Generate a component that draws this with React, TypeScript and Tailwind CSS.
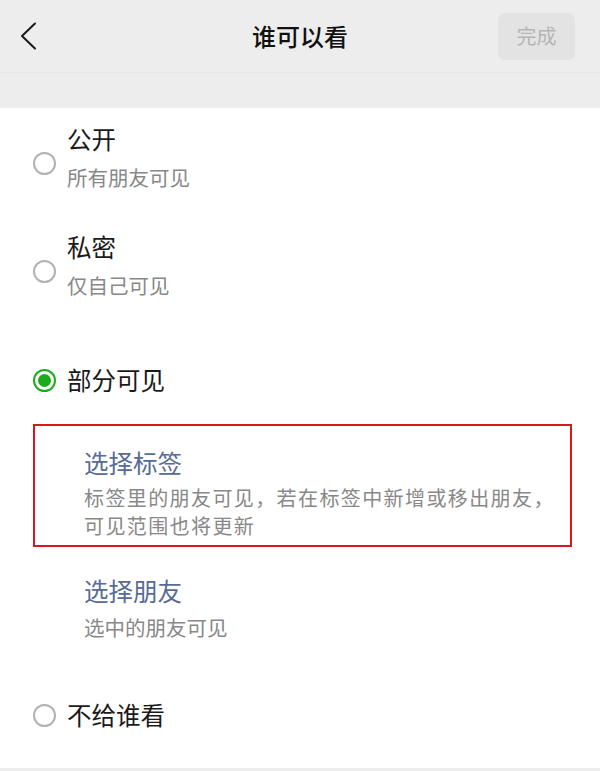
import * as React from 'react';

const FONT = '"Noto Sans CJK SC", "Noto Sans", sans-serif';

type Option = {
  key: string;
  title: string;
  desc?: string;
};

function Radio({ checked = false }: { checked?: boolean }) {
  if (checked) {
    return (
      <span className="flex h-[23px] w-[23px] flex-shrink-0 items-center justify-center rounded-full border-2 border-[#1aad19]">
        <span className="block h-[13px] w-[13px] rounded-full bg-[#1aad19]" />
      </span>
    );
  }
  return <span className="block h-[23px] w-[23px] flex-shrink-0 rounded-full border-2 border-[#b2b2b2]" />;
}

function BackIcon() {
  return (
    <svg width="18" height="28" viewBox="0 0 18 28" fill="none" className="block">
      <polyline points="15,1.5 2,14 15,26.5" stroke="#1a1a1a" strokeWidth="2" strokeLinecap="round" strokeLinejoin="round" />
    </svg>
  );
}

const PLAIN: Option[] = [
  { key: 'public', title: '公开', desc: '所有朋友可见' },
  { key: 'private', title: '私密', desc: '仅自己可见' },
];

function DescOption({ option }: { option: Option }) {
  return (
    <div className="flex h-[108px] items-start pl-[33px] pt-[16px]">
      <div className="mt-[28px] flex-shrink-0">
        <Radio />
      </div>
      <div className="ml-[11px] flex flex-col">
        <span className="text-[24.5px] leading-[30px] text-[#1a1a1a]">{option.title}</span>
        <span className="mt-[9px] text-[20.5px] leading-[28px] text-[#888]">{option.desc}</span>
      </div>
    </div>
  );
}

export default function App() {
  return (
    <div className="flex h-[771px] w-[600px] flex-col overflow-hidden bg-white" style={{ fontFamily: FONT }}>
      {/* Header */}
      <div className="flex h-[108px] flex-shrink-0 flex-col bg-[#ededed]">
        <div className="grid h-[73px] grid-cols-[1fr_auto_1fr] items-center border-b border-[#e6e6e6]">
          <div className="pl-[20px]">
            <BackIcon />
          </div>
          <span className="text-[24px] font-medium leading-[30px] text-[#111]">谁可以看</span>
          <div className="flex justify-end pr-[25px]">
            <button
              type="button"
              className="flex h-[47px] w-[77px] items-center justify-center rounded-[7px] bg-[#e3e3e3] text-[20px] text-[#b5b5b5]"
            >
              完成
            </button>
          </div>
        </div>
      </div>

      {/* Options */}
      <div className="flex flex-1 flex-col">
        {PLAIN.map((o) => (
          <DescOption key={o.key} option={o} />
        ))}

        <div className="mt-[41px] flex items-center pl-[33px]">
          <Radio checked />
          <span className="ml-[11px] text-[24.5px] leading-[30px] text-[#1a1a1a]">部分可见</span>
        </div>

        {/* Highlighted sub-option */}
        <div className="ml-[33px] mt-[29px] flex h-[123px] w-[539px] flex-col border-[2.5px] border-[#d8161e] pl-[49px] pt-[22px]">
          <span className="text-[24.5px] leading-[30px] text-[#576b95]">选择标签</span>
          <span className="mt-[6px] text-[20px] leading-[28px] tracking-[1.4px] text-[#888]">
            标签里的朋友可见，若在标签中新增或移出朋友，
            <br />
            可见范围也将更新
          </span>
        </div>

        <div className="ml-[84px] mt-[29px] flex flex-col">
          <span className="text-[24.5px] leading-[30px] text-[#576b95]">选择朋友</span>
          <span className="mt-[7px] text-[20.5px] leading-[28px] text-[#888]">选中的朋友可见</span>
        </div>

        <div className="mt-[59px] flex items-center pl-[33px]">
          <Radio />
          <span className="ml-[11px] text-[24.5px] leading-[30px] text-[#1a1a1a]">不给谁看</span>
        </div>

        <div className="mt-auto h-[3px] bg-[#ededed]" />
      </div>
    </div>
  );
}
